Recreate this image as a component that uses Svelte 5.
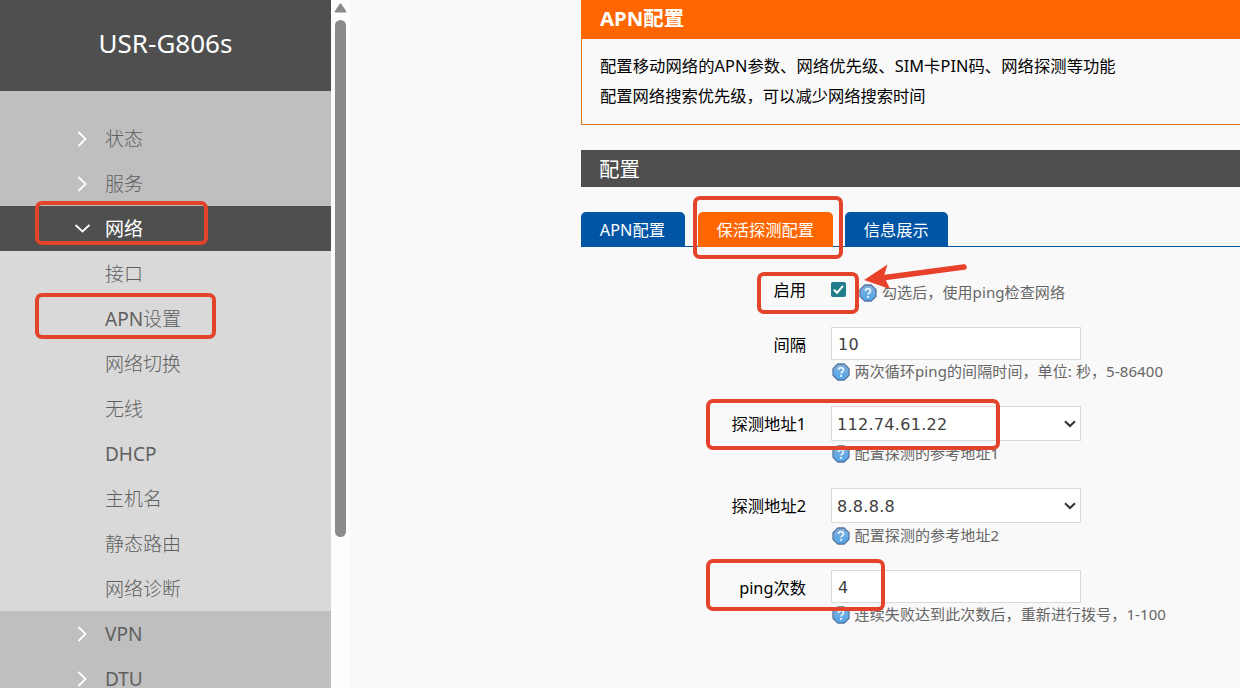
<script lang="ts">
  let openMenu = $state('网络');
  let enabled = $state(true);
  let activeTab = $state('保活探测配置');

  const menu = [
    { name: '状态', items: [] },
    { name: '服务', items: [] },
    {
      name: '网络',
      items: ['接口', 'APN设置', '网络切换', '无线', 'DHCP', '主机名', '静态路由', '网络诊断']
    },
    { name: 'VPN', items: [] },
    { name: 'DTU', items: [] }
  ];

  const tabs = ['APN配置', '保活探测配置', '信息展示'];

  const fields = [
    { label: '间隔', type: 'text', value: '10', hint: '两次循环ping的间隔时间，单位: 秒，5-86400' },
    { label: '探测地址1', type: 'select', value: '112.74.61.22', hint: '配置探测的参考地址1' },
    { label: '探测地址2', type: 'select', value: '8.8.8.8', hint: '配置探测的参考地址2' },
    { label: 'ping次数', type: 'text', value: '4', hint: '连续失败达到此次数后，重新进行拨号，1-100' }
  ];

  // red boxes drawn over the page
  const marks = [
    { x: 37, y: 203, w: 169, h: 40 },
    { x: 37, y: 295, w: 177, h: 42 },
    { x: 695, y: 198, w: 146, h: 59 },
    { x: 759, y: 274, w: 98, h: 38 },
    { x: 708, y: 401, w: 290, h: 47 },
    { x: 708, y: 561, w: 175, h: 48 }
  ];
</script>

{#snippet help()}
  <svg class="help" width="18" height="18" viewBox="0 0 18 18">
    <defs>
      <linearGradient id="helpFill" x1="0" y1="0" x2="0" y2="1">
        <stop offset="0" stop-color="#86aedb" />
        <stop offset="1" stop-color="#4fa8ea" />
      </linearGradient>
    </defs>
    <path d="M5.8 1h6.4L17 5.6v6.6L12.2 17H5.8L1 12.2V5.6z" fill="url(#helpFill)" stroke="#56779f" stroke-width="1.3" stroke-linejoin="round" />
    <path d="M6.4 7.1c0-3.4 5.3-3.1 5.1-.1 0 1.7-2.4 1.7-2.4 3.4" fill="none" stroke="#e8f3fc" stroke-width="1.7" />
    <circle cx="9.1" cy="12.9" r="1.1" fill="#e8f3fc" />
  </svg>
{/snippet}

<div class="page">
  <aside class="sidebar">
    <div class="brand">USR-G806s</div>
    <nav class="menu">
      {#each menu as group}
        <button class="menu-item" class:open={openMenu === group.name} onclick={() => (openMenu = group.name)}>
          <svg class="caret" width="16" height="16" viewBox="0 0 16 16">
            <path d={openMenu === group.name ? 'M1.5 4l7 6.5 7-6.5' : 'M4.5 1l7 7-7 7'} />
          </svg>
          <span>{group.name}</span>
        </button>
        {#if openMenu === group.name}
          <div class="submenu">
            {#each group.items as item}
              <a href="#{item}">{item}</a>
            {/each}
          </div>
        {/if}
      {/each}
    </nav>
  </aside>

  <div class="scrollbar">
    <svg width="13" height="10" viewBox="0 0 13 10">
      <path d="M6.5 1.2L11.6 8.6H1.4z" fill="#8b8b8b" stroke="#8b8b8b" stroke-width="1.6" stroke-linejoin="round" />
    </svg>
    <div class="thumb"></div>
  </div>

  <main class="content">
    <section class="intro">
      <h2>APN配置</h2>
      <div class="intro-text">
        <p class="long">配置移动网络的APN参数、网络优先级、SIM卡PIN码、网络探测等功能</p>
        <p>配置网络搜索优先级，可以减少网络搜索时间</p>
      </div>
    </section>

    <h3>配置</h3>

    <div class="tabs">
      {#each tabs as tab}
        <button class="tab" class:active={activeTab === tab} onclick={() => (activeTab = tab)}>{tab}</button>
      {/each}
    </div>

    <form>
      <div class="row enable">
        <label for="enabled">启用</label>
        <div class="inline">
          <button type="button" id="enabled" class="checkbox" class:checked={enabled} aria-label="启用" onclick={() => (enabled = !enabled)}>
            {#if enabled}
              <svg width="15" height="15" viewBox="0 0 15 15">
                <path d="M3 7.8l3 3 6-7" fill="none" stroke="#fff" stroke-width="2" />
              </svg>
            {/if}
          </button>
          <div class="hint">{@render help()}<span>勾选后，使用ping检查网络</span></div>
        </div>
      </div>

      {#each fields as field, i}
        <div class="row {field.type}">
          <label for="field{i}">{field.label}</label>
          <div class="field">
            {#if field.type === 'select'}
              <div class="select-box">
                <select id="field{i}">
                  <option>{field.value}</option>
                </select>
                <svg class="arrow" width="12" height="8" viewBox="0 0 12 8">
                  <path d="M1 1.2l5 4.8 5-4.8" fill="none" stroke="#333" stroke-width="2" />
                </svg>
              </div>
            {:else}
              <input id="field{i}" type="text" value={field.value} />
            {/if}
            <div class="hint">{@render help()}<span>{field.hint}</span></div>
          </div>
        </div>
      {/each}
    </form>
  </main>

  <svg class="marks" width="1240" height="688" viewBox="0 0 1240 688">
    {#each marks as m}
      <rect x={m.x} y={m.y} width={m.w} height={m.h} rx="5" />
    {/each}
    <path class="shaft" d="M964 267L885 277.5" />
    <path class="head" d="M864 280L887.5 264.5L884 276L890 289Z" />
  </svg>
</div>

<style>
  :global(body) {
    margin: 0;
    overflow: hidden;
  }

  .page {
    position: relative;
    display: flex;
    width: 1240px;
    height: 688px;
    overflow: hidden;
    background: #f9f9f9;
    color: #000;
    font-family: "Noto Sans", "Noto Sans CJK SC", sans-serif;
    font-size: 16.3px;
    white-space: nowrap;
  }

  .page * {
    box-sizing: border-box;
  }

  button {
    border: none;
    padding: 0;
    font: inherit;
    cursor: pointer;
  }

  .sidebar {
    flex: none;
    width: 331px;
    background: #bfbfbf;
  }

  .brand {
    height: 91px;
    background: #4f4f4f;
    color: #fff;
    font-size: 26px;
    line-height: 87px;
    text-align: center;
  }

  .menu {
    display: flex;
    flex-direction: column;
    padding-top: 25px;
    color: #5f5f5f;
    font-family: "Noto Sans", "Noto Sans CJK SC Light", "Noto Sans CJK SC", sans-serif;
    font-size: 19px;
  }

  .menu-item {
    display: flex;
    align-items: center;
    gap: 15px;
    height: 45px;
    padding-left: 74px;
    background: transparent;
    color: #5f5f5f;
    line-height: 46px;
  }

  .menu-item span {
    height: 45px;
  }

  .menu-item.open {
    background: #4f4f4f;
    color: #fff;
    font-family: "Noto Sans", "Noto Sans CJK SC", sans-serif;
  }

  .caret {
    fill: none;
    stroke: #fff;
    stroke-width: 1.8;
  }

  .submenu {
    display: flex;
    flex-direction: column;
    background: #d9d9d9;
  }

  .submenu a {
    height: 45px;
    padding-left: 105px;
    color: #5f5f5f;
    line-height: 46px;
    text-decoration: none;
  }

  .scrollbar {
    display: flex;
    flex: none;
    flex-direction: column;
    align-items: center;
    gap: 7px;
    width: 19px;
    padding-top: 3px;
    background: #fdfdfd;
  }

  .thumb {
    width: 11px;
    height: 517px;
    border-radius: 6px;
    background: #8b8b8b;
  }

  .content {
    flex: 1;
    padding-left: 231px;
  }

  .intro {
    height: 125px;
    border: 1px solid #d9781e;
    border-width: 0 0 1px 1px;
  }

  h2 {
    height: 39px;
    margin: 0 0 0 -1px;
    padding-left: 19px;
    background: #ff6600;
    color: #fff;
    font-size: 20.4px;
    line-height: 37px;
  }

  .intro-text {
    padding: 12px 0 0 18px;
  }

  p {
    margin: 0;
    line-height: 30px;
  }

  p.long {
    letter-spacing: 0.08px;
  }

  h3 {
    height: 37px;
    margin: 25px 0;
    padding-left: 18px;
    background: #4f4f4f;
    color: #fff;
    font-size: 20.4px;
    font-weight: 400;
    line-height: 39px;
  }

  .tabs {
    display: flex;
    height: 35px;
    border-bottom: 1px solid #0055a5;
  }

  .tab {
    height: 35px;
    margin-right: 12px;
    padding: 0 18.8px 1px;
    border-radius: 5px 5px 0 0;
    background: #0055a5;
    color: #fff;
  }

  .tab:first-child {
    margin-right: 13px;
    padding-right: 19.6px;
  }

  .tab.active {
    background: #ff6600;
  }

  form {
    display: flex;
    flex-direction: column;
    padding-top: 25px;
  }

  .row {
    display: flex;
    gap: 25px;
  }

  .row > label {
    width: 225px;
    line-height: 37px;
    text-align: right;
  }

  .row.enable {
    height: 55px;
  }

  .row.text {
    height: 79px;
  }

  .row.select {
    height: 82px;
  }

  .inline {
    display: flex;
    align-items: flex-start;
    padding-top: 10px;
  }

  .checkbox {
    width: 15px;
    height: 15px;
    margin-right: 13px;
    border: 1px solid #767676;
    border-radius: 2px;
    background: #fff;
  }

  .checkbox.checked {
    border: none;
    background: #217d8b;
  }

  .checkbox svg {
    display: block;
  }

  input,
  select {
    display: block;
    width: 250px;
    margin: 0;
    padding: 1px 6px 0;
    border: 1px solid #d9d9d9;
    border-radius: 0;
    background: #fff;
    color: #404040;
    font-family: "DejaVu Sans", sans-serif;
    font-size: 16px;
    letter-spacing: 0.3px;
  }

  input {
    height: 33px;
  }

  select {
    height: 35px;
    padding-left: 5px;
    appearance: none;
  }

  .select-box {
    position: relative;
  }

  .arrow {
    position: absolute;
    top: 14px;
    right: 5px;
    pointer-events: none;
  }

  .hint {
    display: flex;
    align-items: center;
    gap: 5px;
    height: 25px;
    padding-left: 0.6px;
    color: #666;
    font-size: 15px;
    letter-spacing: 0.1px;
  }

  .hint span {
    padding-bottom: 3px;
  }

  .inline .hint {
    height: 22px;
    padding-left: 0;
  }

  .row.text .hint {
    height: 24px;
  }

  .marks {
    position: absolute;
    top: 0;
    left: 0;
    pointer-events: none;
  }

  .marks rect {
    fill: none;
    stroke: #e2432a;
    stroke-width: 4;
  }

  .shaft {
    stroke: #e8412a;
    stroke-width: 5.5;
    stroke-linecap: round;
  }

  .head {
    fill: #e8412a;
  }
</style>
